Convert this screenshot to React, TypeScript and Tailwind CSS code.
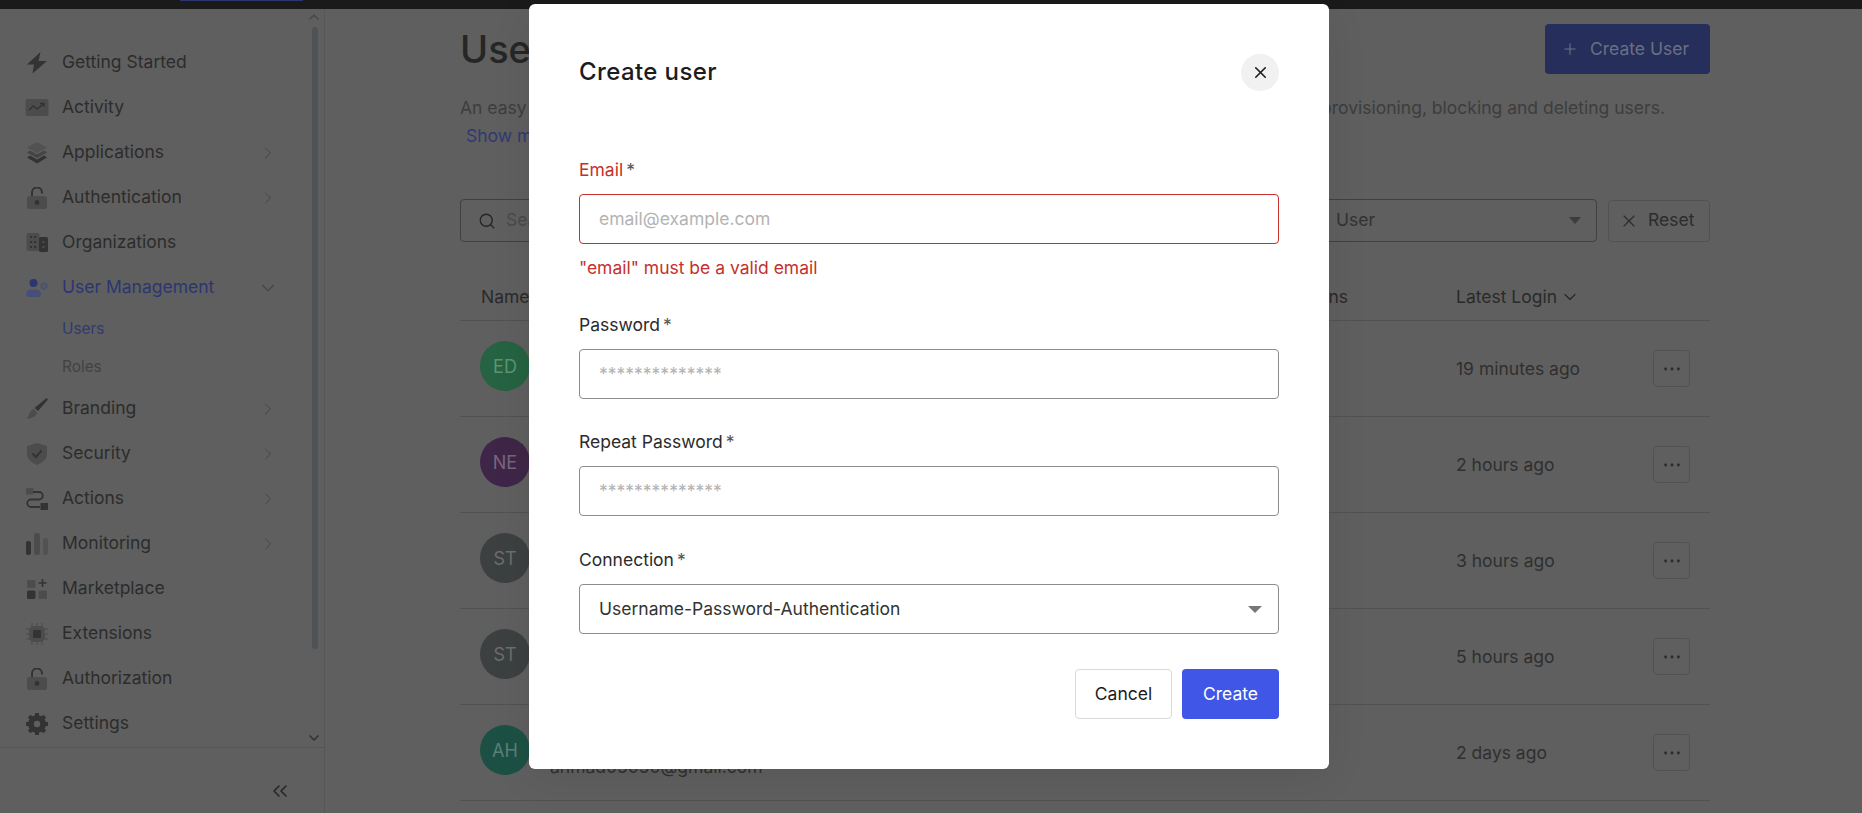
import { ChevronDown, ChevronRight, ChevronUp, ChevronsLeft, Ellipsis, Plus, Search, X } from "lucide-react";

const dark = "#333333";
const light = "#4c4c4c";

function Bolt() {
    return <svg width="22" height="22" viewBox="0 0 22 22"><path d="M14.500 0 L1 12.500 L8 12.500 L6.500 21.500 L21 9 L12.500 9 Z" fill={dark} /></svg>;
}
function ActivityIcon() {
    return <svg width="24" height="18" viewBox="0 0 24 18"><rect width="23" height="17" x="0.500" rx="2" fill={light} /><path d="M4 11 L8.500 7 L12 10 L18.500 5 M15 4.500 L19 4.500 L19 8" stroke={dark} strokeWidth="1.400" fill="none" /></svg>;
}
function Layers() {
    return <svg width="22" height="22" viewBox="0 0 22 22"><path d="M11 0 L21 5.500 L11 11 L1 5.500 Z" fill="#525252" /><path d="M4 8.500 L11 12.500 L18 8.500 L21 10.500 L11 16 L1 10.500 Z" fill="#444444" /><path d="M4 13.500 L11 17.500 L18 13.500 L21 15.500 L11 21.500 L1 15.500 Z" fill={dark} /></svg>;
}
function Lock() {
    return <svg width="20" height="22" viewBox="0 0 20 22"><path d="M5 9 V5.500 a5 5 0 0 1 10 0 V6.500" stroke={dark} strokeWidth="2" fill="none" /><rect y="9" width="20" height="13" rx="2.500" fill={light} /><circle cx="10" cy="15.500" r="2.400" fill={dark} /></svg>;
}
function Building() {
    return <svg width="22" height="19" viewBox="0 0 22 19"><rect x="0.500" width="13" height="18" rx="2" fill={light} /><rect x="13" y="4" width="9" height="15" rx="1.500" fill={dark} /><g fill={dark}><rect x="4" y="3" width="2" height="2" /><rect x="8" y="3" width="2" height="2" /><rect x="4" y="8" width="2" height="2" /><rect x="8" y="8" width="2" height="2" /><rect x="4" y="13" width="2" height="2" /><rect x="8" y="13" width="2" height="2" /></g><rect x="16.500" y="8" width="2" height="2" fill={light} /><rect x="16.500" y="13" width="2" height="2" fill={light} /></svg>;
}
function UserCog() {
    return <svg width="22" height="18" viewBox="0 0 22 18"><circle cx="7.500" cy="4" r="4" fill="#2c3670" /><path d="M0 15 a5 4.500 0 0 1 5-4.500 h5 a5 4.500 0 0 1 5 4.500 a3 3 0 0 1-3 3 h-4 H3 a3 3 0 0 1-3-3 Z" fill="#465077" /><circle cx="18" cy="7" r="2.500" fill="none" stroke="#465077" strokeWidth="2.400" strokeDasharray="2 0.600" /></svg>;
}
function Brush() {
    return <svg width="22" height="22" viewBox="0 0 22 22"><path d="M20.500 0 L22 1.500 L12 13 L8.500 10 Z" fill={dark} /><path d="M7.500 11 L11 14.500 C10 18.500 6 20.500 0.500 20.500 C3 19 3 13 7.500 11 Z" fill={light} /></svg>;
}
function Shield() {
    return <svg width="20" height="22" viewBox="0 0 20 22"><path d="M10 0 L20 3 V11 C20 17 14 20 10 22 C6 20 0 17 0 11 V3 Z" fill={light} /><path d="M5.500 10.500 L9 14 L14.500 7.500" stroke={dark} strokeWidth="2" fill="none" /></svg>;
}
function Flow() {
    return <svg width="22" height="22" viewBox="0 0 22 22"><rect width="7.500" height="6.500" rx="1" fill={light} /><rect x="14.500" y="15" width="7.500" height="7" fill={dark} /><path d="M7 4 H13 a3.500 3.500 0 0 1 0 7.500 H5 a3.500 3.500 0 0 0 0 7.500 H14" stroke={dark} strokeWidth="1.800" fill="none" /></svg>;
}
function Bars() {
    return <svg width="22" height="22" viewBox="0 0 22 22"><rect y="8" width="5" height="14" rx="2" fill={dark} /><rect x="8" width="6" height="22" rx="2" fill={light} /><rect x="17" y="5" width="5" height="17" rx="2" fill="#525252" /></svg>;
}
function Market() {
    return <svg width="20" height="20" viewBox="0 0 20 20"><rect y="1" width="8.500" height="8" rx="1.500" fill={light} /><rect y="11.500" width="8.500" height="8.500" rx="1.500" fill={dark} /><rect x="11.500" y="11.500" width="8.500" height="8.500" rx="1.500" fill={light} /><path d="M15.500 0 V8 M11.500 4 H19.500" stroke={dark} strokeWidth="1.600" /></svg>;
}
function Chip() {
    return <svg width="22" height="22" viewBox="0 0 22 22"><path d="M6 0 V22 M11 0 V22 M16 0 V22 M0 6 H22 M0 11 H22 M0 16 H22" stroke="#525252" strokeWidth="1.600" /><rect x="3" y="3" width="16" height="16" rx="5" fill={light} /><rect x="7" y="7" width="8" height="8" rx="1" fill={dark} /></svg>;
}
function Gear() {
    return <svg width="22" height="22" viewBox="0 0 22 22"><circle cx="11" cy="11" r="7" fill="none" stroke={dark} strokeWidth="4" /><path d="M11 0 V22 M0 11 H22 M3.200 3.200 L18.800 18.800 M18.800 3.200 L3.200 18.800" stroke={dark} strokeWidth="4" /><circle cx="11" cy="11" r="3.200" fill="#5f5f5f" /></svg>;
}

const navTop = [
    { label: "Getting Started", icon: <Bolt /> },
    { label: "Activity", icon: <ActivityIcon /> },
    { label: "Applications", icon: <Layers />, more: true },
    { label: "Authentication", icon: <Lock />, more: true },
    { label: "Organizations", icon: <Building /> },
];
const navBottom = [
    { label: "Branding", icon: <Brush />, more: true },
    { label: "Security", icon: <Shield />, more: true },
    { label: "Actions", icon: <Flow />, more: true },
    { label: "Monitoring", icon: <Bars />, more: true },
    { label: "Marketplace", icon: <Market /> },
    { label: "Extensions", icon: <Chip /> },
    { label: "Authorization", icon: <Lock /> },
    { label: "Settings", icon: <Gear /> },
];

const users = [
    { initials: "ED", color: "bg-[#256342]", text: "text-[#5c9375]", login: "19 minutes ago" },
    { initials: "NE", color: "bg-[#3f2648]", text: "text-[#75667d]", login: "2 hours ago" },
    { initials: "ST", color: "bg-[#3c4040]", text: "text-[#6b6e6e]", login: "3 hours ago" },
    { initials: "ST", color: "bg-[#3c4040]", text: "text-[#6b6e6e]", login: "5 hours ago" },
    { initials: "AH", color: "bg-[#1d5044]", text: "text-[#5a8076]", login: "2 days ago", email: "ahmad05050@gmail.com" },
];

function NavRow({ label, icon, more }: { label: string; icon: React.ReactNode; more?: boolean }) {
    return (
        <div className="flex h-[45px] items-center">
            <div className="flex w-[62px] shrink-0 justify-center pl-[12px]">{icon}</div>
            <span className="flex-1 text-[17.500px] text-[#2c2c2c]">{label}</span>
            {more && <ChevronRight size={20} strokeWidth={1.200} className="mr-[46px] text-[#454545]" />}
        </div>
    );
}

function Field({ label, error, placeholder }: { label: string; error?: boolean; placeholder: string }) {
    return (
        <div className="flex flex-col">
            <label className={`flex h-[24px] items-center gap-[3px] text-[17.500px] ${error ? "text-[#c62f2b]" : "text-[#2b2b2b]"}`}>
                {label} <span className="text-[#555]">*</span>
            </label>
            <input
                readOnly
                placeholder={placeholder}
                className={`mt-[12px] h-[50px] w-full rounded-[4px] border pb-[2px] px-[19px] text-[17.500px] outline-none placeholder:text-[#b3b3b3] ${error ? "border-[#c62f2b]" : "border-[#8c8c8c]"}`}
            />
        </div>
    );
}

export default function App() {
    return (
        <div className="relative h-[813px] w-full overflow-hidden bg-[#5f5f5f] font-['Inter',sans-serif]">
            <div className="relative h-[9px] bg-[#1a1a1a]">
                <div className="absolute left-[180px] top-0 h-px w-[123px] bg-[#2b3670]" />
            </div>
            <div className="flex h-[804px]">
                <aside className="flex w-[325px] shrink-0 flex-col border-r border-[#575757]">
                    <div className="relative h-[738px] pt-[31px]">
                        {navTop.map((item) => <NavRow key={item.label} {...item} />)}
                        <div className="flex h-[45px] items-center">
                            <div className="flex w-[62px] shrink-0 justify-center pl-[12px]"><UserCog /></div>
                            <span className="flex-1 text-[17.500px] text-[#2c3670]">User Management</span>
                            <ChevronDown size={22} strokeWidth={1.200} className="mr-[45px] text-[#454545]" />
                        </div>
                        <div className="flex h-[37px] items-center pl-[62px] pt-[1px] text-[15.400px] text-[#2f3a72]">Users</div>
                        <div className="flex h-[39px] items-center pl-[62px] pt-[1px] text-[15.400px] text-[#424242]">Roles</div>
                        {navBottom.map((item) => <NavRow key={item.label} {...item} />)}
                        <ChevronUp size={16} strokeWidth={2.500} className="absolute right-[2px] top-[0px] text-[#4a4a4a]" />
                        <div className="absolute right-[6px] top-[18px] h-[622px] w-[6px] rounded-full bg-[#4f5357]" />
                        <ChevronDown size={16} strokeWidth={2.500} className="absolute right-[2px] top-[721px] text-[#333]" />
                    </div>
                    <div className="flex flex-1 items-center justify-end border-t border-[#555555] pr-[32px] pt-[20px]">
                        <ChevronsLeft size={24} strokeWidth={1.600} className="text-[#262626]" />
                    </div>
                </aside>

                <main className="flex-1 pl-[135px] pr-[152px]">
                    <div className="flex h-[65px] items-start justify-between pt-[15px]">
                        <h1 className="text-[38px] leading-[50px] font-medium text-[#262626]">Users</h1>
                        <button className="flex h-[50px] w-[165px] items-center gap-[11px] rounded-[4px] bg-[#262e5c] pl-[16px] text-[17.500px] text-[#6c7080]">
                            <Plus size={18} strokeWidth={1.500} /> Create User
                        </button>
                    </div>
                    <p className="mt-[20px] h-[28px] text-[17.500px] leading-[28px] whitespace-nowrap text-[#3d3d3d]">
                        An easy to use UI to help administrators manage user identities including password resets, creating and provisioning, blocking and deleting users.
                    </p>
                    <p className="h-[28px] pl-[6px] text-[17.500px] leading-[28px] text-[#2f3a72]">Show more</p>

                    <div className="mt-[49px] flex items-center gap-[11px]">
                        <div className="flex h-[43px] flex-1 items-center rounded-[4px] border border-[#404040] pl-[17px] text-[17.500px] text-[#4a4a4a]">
                            <Search size={18} strokeWidth={1.800} className="mr-[10px] text-[#262626]" /> Search
                        </div>
                        <div className="flex h-[43px] w-[277px] items-center justify-between rounded-[4px] border border-[#404040] pl-[15px] pr-[15px] text-[17.500px] text-[#333]">
                            User
                            <span className="h-0 w-0 border-x-[6px] border-t-[7px] border-x-transparent border-t-[#3d3d3d]" />
                        </div>
                        <button className="flex h-[42px] w-[102px] items-center gap-[9px] rounded-[4px] border border-[#525252] pl-[10px] text-[17.500px] text-[#2c2c2c]">
                            <X size={20} strokeWidth={1.400} /> Reset
                        </button>
                    </div>

                    <div className="mt-[32px] flex h-[47px] items-center border-b border-[#525252] text-[17.500px] text-[#2a2a2a]">
                        <span className="flex-1 pl-[21px]">Name</span>
                        <span className="mr-[108px]">Connections</span>
                        <span className="flex w-[254px] items-center gap-[3px]">Latest Login <ChevronDown size={20} strokeWidth={1.500} /></span>
                    </div>

                    {users.map((user, i) => (
                        <div key={i} className="relative flex h-[96px] items-start border-b border-[#525252] pl-[20px]">
                            <div className={`mt-[20px] flex h-[50px] w-[50px] shrink-0 items-center justify-center rounded-full text-[18px] ${user.color} ${user.text}`}>{user.initials}</div>
                            <div className="flex-1 pl-[20px] pt-[49px] text-[17.500px] text-[#2f2f2f]">{user.email}</div>
                            <div className="flex h-[75px] w-[197px] items-center pt-[21px] text-[17.500px] text-[#2f2f2f]">{user.login}</div>
                            <button className="mr-[20px] mt-[29px] flex h-[37px] w-[37px] items-center justify-center rounded-[4px] border border-[#525252] text-[#262626]">
                                <Ellipsis size={22} strokeWidth={1.100} />
                            </button>
                        </div>
                    ))}
                </main>
            </div>

            <div className="absolute inset-0 flex items-start justify-center pr-[4px] pt-[4px]">
                <div className="flex h-[765px] w-[800px] flex-col rounded-[6px] bg-white px-[50px] shadow-[0_8px_40px_rgba(0,0,0,0.08)]">
                    <div className="flex h-[118px] items-start justify-between pt-[50px]">
                        <h2 className="text-[24px] leading-[36px] font-[450] tracking-[0.4px] text-[#1c1c1c]">Create user</h2>
                        <button className="flex h-[37px] w-[38px] items-center justify-center rounded-full bg-[#f1f1f1] text-[#1c1c1c]">
                            <X size={19} strokeWidth={2} />
                        </button>
                    </div>
                    <div className="mt-[36px]">
                        <Field label="Email" error placeholder="email@example.com" />
                        <p className="mt-[12px] h-[24px] text-[17.500px] leading-[24px] text-[#c62f2b]">"email" must be a valid email</p>
                    </div>
                    <div className="mt-[33px]"><Field label="Password" placeholder="**************" /></div>
                    <div className="mt-[31px]"><Field label="Repeat Password" placeholder="**************" /></div>
                    <div className="mt-[32px] flex flex-col">
                        <label className="flex h-[24px] items-center gap-[3px] text-[17.500px] text-[#2b2b2b]">Connection <span className="text-[#555]">*</span></label>
                        <div className="mt-[12px] flex h-[50px] items-center justify-between rounded-[4px] border border-[#8c8c8c] pl-[19px] pr-[16px] text-[17.500px] text-[#333]">
                            Username-Password-Authentication
                            <span className="h-0 w-0 border-x-[7px] border-t-[7px] border-x-transparent border-t-[#777]" />
                        </div>
                    </div>
                    <div className="mt-[35px] flex justify-end gap-[10px]">
                        <button className="h-[50px] w-[97px] rounded-[4px] border border-[#d9d9d9] bg-white text-[17.500px] text-[#1c1c1c]">Cancel</button>
                        <button className="h-[50px] w-[97px] rounded-[4px] bg-[#3f56e6] text-[17.500px] text-white">Create</button>
                    </div>
                </div>
            </div>
        </div>
    );
}
